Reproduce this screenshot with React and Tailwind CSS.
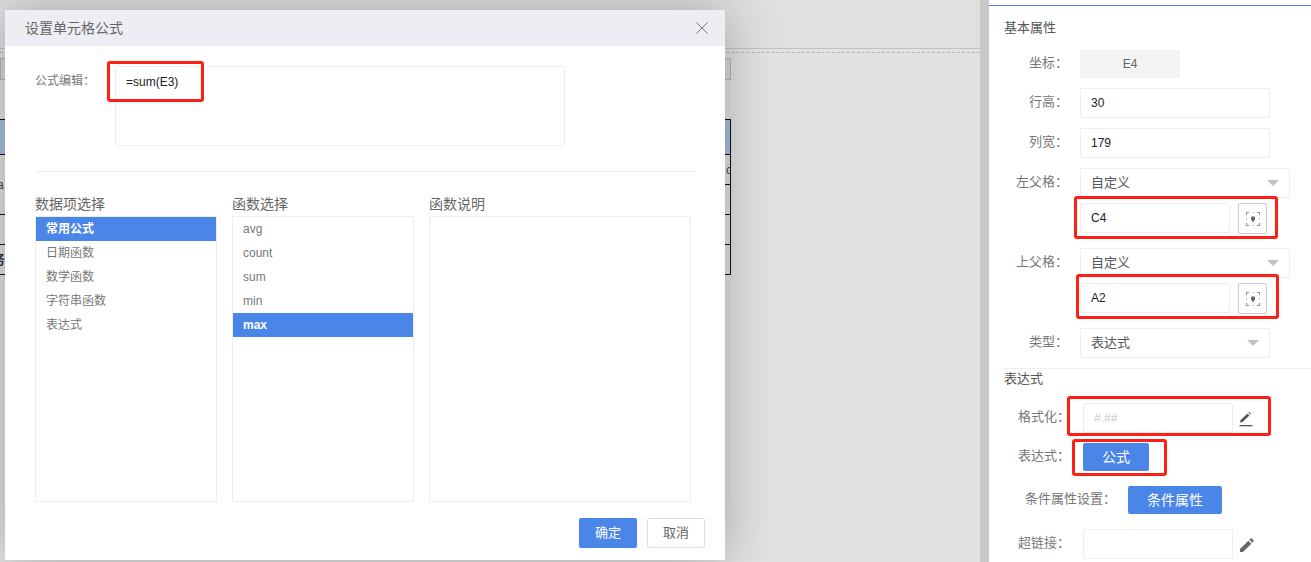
import React from "react";

const font = { fontFamily: '"Liberation Sans", "Noto Sans CJK SC", sans-serif' };

function Arrow() {
  return (
    <svg width="12" height="6" viewBox="0 0 12 6" className="shrink-0">
      <path d="M0 0H12L6 6Z" fill="#c2c2c2" />
    </svg>
  );
}

function TargetIcon() {
  return (
    <svg width="14" height="14" viewBox="0 0 14 14" fill="none" stroke="#8a8a8a" strokeWidth="1">
      <path d="M0.5 3V0.5H3M11 0.5H13.5V3M13.5 11V13.5H11M3 13.5H0.5V11" />
      <path d="M6 0.5H8M6 13.5H8M0.5 6V8M13.5 6V8" stroke="#d0d0d0" />
      <path d="M7 10.5C6.4 9.2 4.8 8 4.8 6.3C4.8 5 5.8 4.2 7 4.2C8.2 4.2 9.2 5 9.2 6.3C9.2 8 7.6 9.2 7 10.5Z" fill="#666" stroke="none" />
    </svg>
  );
}

function PencilLine() {
  return (
    <svg width="14" height="15" viewBox="0 0 14 15">
      <path d="M1 10.5L1.6 8L8.6 1.6L10.4 3.4L3.6 10Z" fill="#555" />
      <path d="M9.4 0.8L10.2 0L12 1.8L11.2 2.6Z" fill="#555" />
      <rect x="0.5" y="13" width="13" height="1.3" fill="#555" />
    </svg>
  );
}

function PencilFill() {
  return (
    <svg width="15" height="15" viewBox="0 0 16 16">
      <path d="M1 15V11.8L10 2.8L13.2 6L4.2 15Z M11 1.8L12.2 0.6C12.6 0.2 13.2 0.2 13.6 0.6L15.4 2.4C15.8 2.8 15.8 3.4 15.4 3.8L14.2 5Z" fill="#666" />
    </svg>
  );
}

function Label({ children, wide }) {
  return (
    <div className={`${wide ? "w-[81px] mr-[13px]" : "w-[79px] mr-[12px]"} shrink-0 pb-[3px] text-right text-[13px] text-[#777]`}>
      {children}
    </div>
  );
}

function TextBox({ value, width, placeholder }) {
  return (
    <div className={`${width} h-[30px] flex items-center pl-[10px] border border-[#eeeeee] rounded-[2px] bg-white text-[12px] ${placeholder ? "text-[#c8c8c8]" : "text-[#222]"}`}>
      {value}
    </div>
  );
}

function Select({ value, width }) {
  return (
    <div className={`${width} h-[30px] flex items-center justify-between pl-[10px] pr-[10px] border border-[#eeeeee] rounded-[2px] bg-white text-[13px] text-[#555]`}>
      <span>{value}</span>
      <Arrow />
    </div>
  );
}

function PickButton() {
  return (
    <div className="ml-[8px] w-[29px] h-[31px] shrink-0 flex items-center justify-center border border-[#cccccc] rounded-[2px] bg-white">
      <TargetIcon />
    </div>
  );
}

function ListBox({ width, items, active }) {
  return (
    <div className={`${width} h-[286px] border border-[#eeeeee] text-[12px] text-[#777]`}>
      {items.map((item) => (
        <div
          key={item}
          className={`h-[24px] flex items-center pl-[10px] ${item === active ? "bg-[#4a86e8] text-white font-bold" : ""}`}
        >
          {item}
        </div>
      ))}
    </div>
  );
}

const redBoxes = [
  "left-[107px] top-[61px] w-[97px] h-[41px]",
  "left-[1074px] top-[196px] w-[204px] h-[43px]",
  "left-[1076px] top-[274px] w-[203px] h-[45px]",
  "left-[1067px] top-[396px] w-[204px] h-[40px]",
  "left-[1072px] top-[439px] w-[95px] h-[37px]",
];

export default function App() {
  return (
    <div className="relative flex w-[1311px] h-[562px] overflow-hidden bg-[#e2e2e2]" style={font}>
      {/* Sheet behind the dialog */}
      <div className="w-[989px] shrink-0 border-r-[9px] border-[#c8c8c8]">
        <div className="h-[49px] bg-[#e0e0e0] border-b border-[#c4c4c4]" />
        <div className="mt-[3px] border-t border-dashed border-[#b5b5b5]" />
        <div className="mt-[5px] w-[731px] h-[22px] bg-[#d8d8d8] border border-[#b5b5b5]" />
        <div className="mt-[39px] w-[731px] border-t-[1px] border-r-[1px] border-[#111] text-[12px] text-[#444]">
          <div className="h-[35px] bg-[#aabfdc] border-b border-[#111]" />
          <div className="flex h-[60px] border-b border-[#111]">
            <div className="w-[6px] overflow-hidden flex items-center"><span className="-ml-[3px]">a</span></div>
            <div className="flex-1 flex flex-col">
              <div className="h-[30px] border-b border-[#111] flex items-center justify-end overflow-hidden">
                <span className="mr-[-2px]">c</span>
              </div>
            </div>
          </div>
          <div className="h-[30px] border-b border-[#111]" />
          <div className="h-[30px] border-b border-[#111] overflow-hidden flex items-center font-bold text-[13px] text-[#333]">
            <span className="-ml-[8px]">务</span>
          </div>
        </div>
      </div>

      {/* Properties panel */}
      <div className="flex-1 bg-white pt-[5px]">
        <div className="border-t border-[#4a86d8] pt-[12px]">
          <div className="h-[20px] flex items-center pl-[15px] text-[13px] text-[#555]">基本属性</div>

          <div className="mt-[12px] flex items-center">
            <Label>坐标：</Label>
            <div className="w-[100px] h-[28px] flex items-center justify-center bg-[#f4f4f4] text-[12px] text-[#666]">E4</div>
          </div>
          <div className="mt-[10px] flex items-center">
            <Label>行高：</Label>
            <TextBox value="30" width="w-[190px]" />
          </div>
          <div className="mt-[10px] flex items-center">
            <Label>列宽：</Label>
            <TextBox value="179" width="w-[190px]" />
          </div>
          <div className="mt-[10px] flex items-center">
            <Label>左父格：</Label>
            <Select value="自定义" width="w-[210px]" />
          </div>
          <div className="mt-[5px] ml-[91px] h-[30px] flex items-start">
            <TextBox value="C4" width="w-[150px]" />
            <PickButton />
          </div>
          <div className="mt-[15px] flex items-center">
            <Label>上父格：</Label>
            <Select value="自定义" width="w-[210px]" />
          </div>
          <div className="mt-[5px] ml-[91px] h-[30px] flex items-start">
            <TextBox value="A2" width="w-[150px]" />
            <PickButton />
          </div>
          <div className="mt-[15px] flex items-center">
            <Label>类型：</Label>
            <Select value="表达式" width="w-[190px]" />
          </div>

          <div className="mt-[10px] ml-[15px] border-t border-[#eeeeee]" />
          <div className="h-[20px] flex items-center pl-[15px] text-[13px] text-[#555]">表达式</div>

          <div className="mt-[14px] h-[30px] flex items-center">
            <Label wide>格式化：</Label>
            <TextBox value="#.##" width="w-[150px]" placeholder />
            <div className="ml-[6px] mt-[2px] flex"><PencilLine /></div>
          </div>
          <div className="mt-[10px] flex items-center">
            <Label wide>表达式：</Label>
            <div className="w-[66px] h-[28px] flex items-center justify-center rounded-[2px] bg-[#4a86e8] text-[14px] text-white">公式</div>
          </div>
          <div className="mt-[15px] flex items-center">
            <div className="ml-[36px] mr-[12px] w-[91px] pb-[3px] text-[13px] text-[#777] whitespace-nowrap">条件属性设置：</div>
            <div className="w-[94px] h-[28px] flex items-center justify-center rounded-[2px] bg-[#4a86e8] text-[14px] text-white">条件属性</div>
          </div>
          <div className="mt-[15px] h-[30px] flex items-center">
            <Label wide>超链接：</Label>
            <TextBox value="" width="w-[150px]" />
            <div className="ml-[6px] mt-[2px] flex"><PencilFill /></div>
          </div>
        </div>
      </div>

      {/* Dialog */}
      <div className="absolute left-[5px] top-[10px] w-[720px] h-[550px] bg-white shadow-[0_0_50px_rgba(0,0,0,0.28)]">
        <div className="h-[36px] flex items-center justify-between pl-[20px] pr-[17px] bg-[#eceef3]">
          <span className="text-[14px] text-[#666]">设置单元格公式</span>
          <svg width="12" height="12" viewBox="0 0 12 12" fill="none" stroke="#777" strokeWidth="1">
            <path d="M0.5 0.5L11.5 11.5M11.5 0.5L0.5 11.5" />
          </svg>
        </div>
        <div className="pl-[30px] pr-[20px] pt-[20px]">
          <div className="flex">
            <div className="w-[80px] pt-[6px] text-[12px] text-[#777]">公式编辑：</div>
            <div className="w-[450px] h-[80px] border border-[#eeeeee] rounded-[2px] pl-[10px] pt-[6px] text-[12px] text-[#222]">=sum(E3)</div>
          </div>
          <div className="mt-[25px] w-[660px] border-t border-[#eeeeee]" />
          <div className="mt-[24px] flex gap-[15px]">
            <div>
              <div className="h-[20px] leading-[16px] text-[14px] text-[#666]">数据项选择</div>
              <ListBox width="w-[182px]" items={["常用公式", "日期函数", "数学函数", "字符串函数", "表达式"]} active="常用公式" />
            </div>
            <div>
              <div className="h-[20px] leading-[16px] text-[14px] text-[#666]">函数选择</div>
              <ListBox width="w-[182px]" items={["avg", "count", "sum", "min", "max"]} active="max" />
            </div>
            <div>
              <div className="h-[20px] leading-[16px] text-[14px] text-[#666]">函数说明</div>
              <ListBox width="w-[262px]" items={[]} />
            </div>
          </div>
          <div className="mt-[16px] flex justify-end gap-[10px]">
            <div className="w-[58px] h-[30px] flex items-center justify-center rounded-[2px] bg-[#4a86e8] text-[13px] text-white">确定</div>
            <div className="w-[58px] h-[30px] flex items-center justify-center rounded-[2px] border border-[#dddddd] bg-white text-[13px] text-[#666]">取消</div>
          </div>
        </div>
      </div>

      {/* Red annotation boxes */}
      {redBoxes.map((c) => (
        <div key={c} className={`absolute ${c} border-[3px] border-[#ff2015] rounded-[3px]`} />
      ))}
    </div>
  );
}
